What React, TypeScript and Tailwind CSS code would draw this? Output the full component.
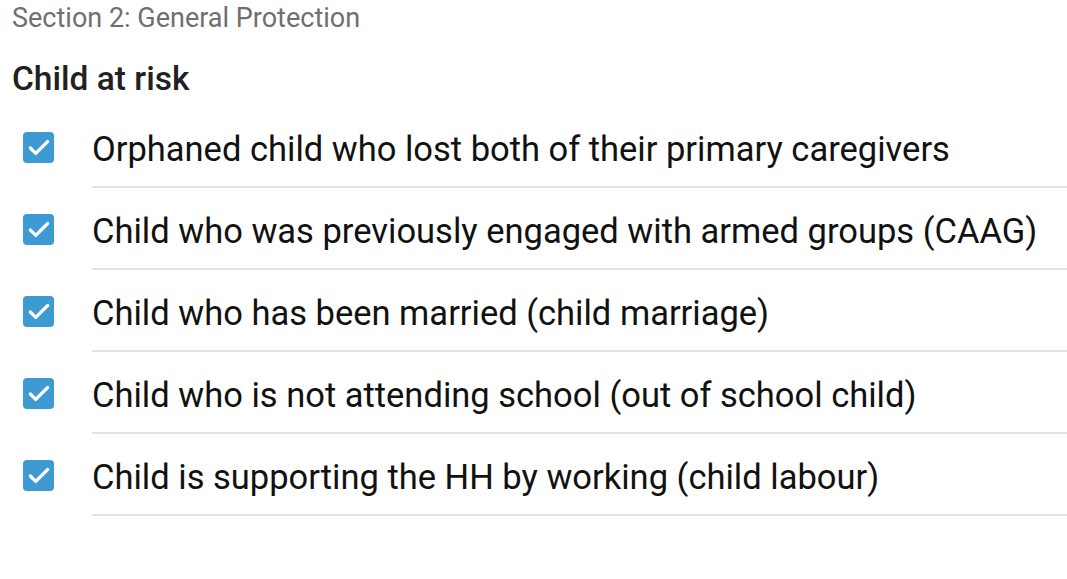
import { Check } from 'lucide-react';

const items = [
  'Orphaned child who lost both of their primary caregivers',
  'Child who was previously engaged with armed groups (CAAG)',
  'Child who has been married (child marriage)',
  'Child who is not attending school (out of school child)',
  'Child is supporting the HH by working (child labour)',
];

export default function App() {
  return (
    <div className="w-[1067px] h-[579px] bg-white overflow-hidden font-['Roboto',sans-serif]">
      {/* Section header */}
      <div className="pl-3 text-[27px] leading-[36px] text-[#6f6f6f]">
        Section 2: General Protection
      </div>

      <h2 className="pl-3 mt-[23px] text-[33.5px] leading-[40px] font-medium text-[#212121]">
        Child at risk
      </h2>

      {/* Checklist */}
      <div className="mt-[7px]">
        {items.map((label) => (
          <div key={label} className="flex items-stretch h-[82px]">
            <div className="w-[92px] flex items-center pl-[23px] pt-[1px]">
              <div className="w-[31px] h-[31px] rounded-[4px] bg-[#3d9ad3] flex items-center justify-center">
                <Check size={26} strokeWidth={3} className="text-white" />
              </div>
            </div>
            <div className="flex-1 flex items-center pt-[6px] border-b-2 border-[#e3e3e3]">
              <span className="text-[34.5px] leading-[40px] text-[#111111]">{label}</span>
            </div>
          </div>
        ))}
      </div>
    </div>
  );
}
